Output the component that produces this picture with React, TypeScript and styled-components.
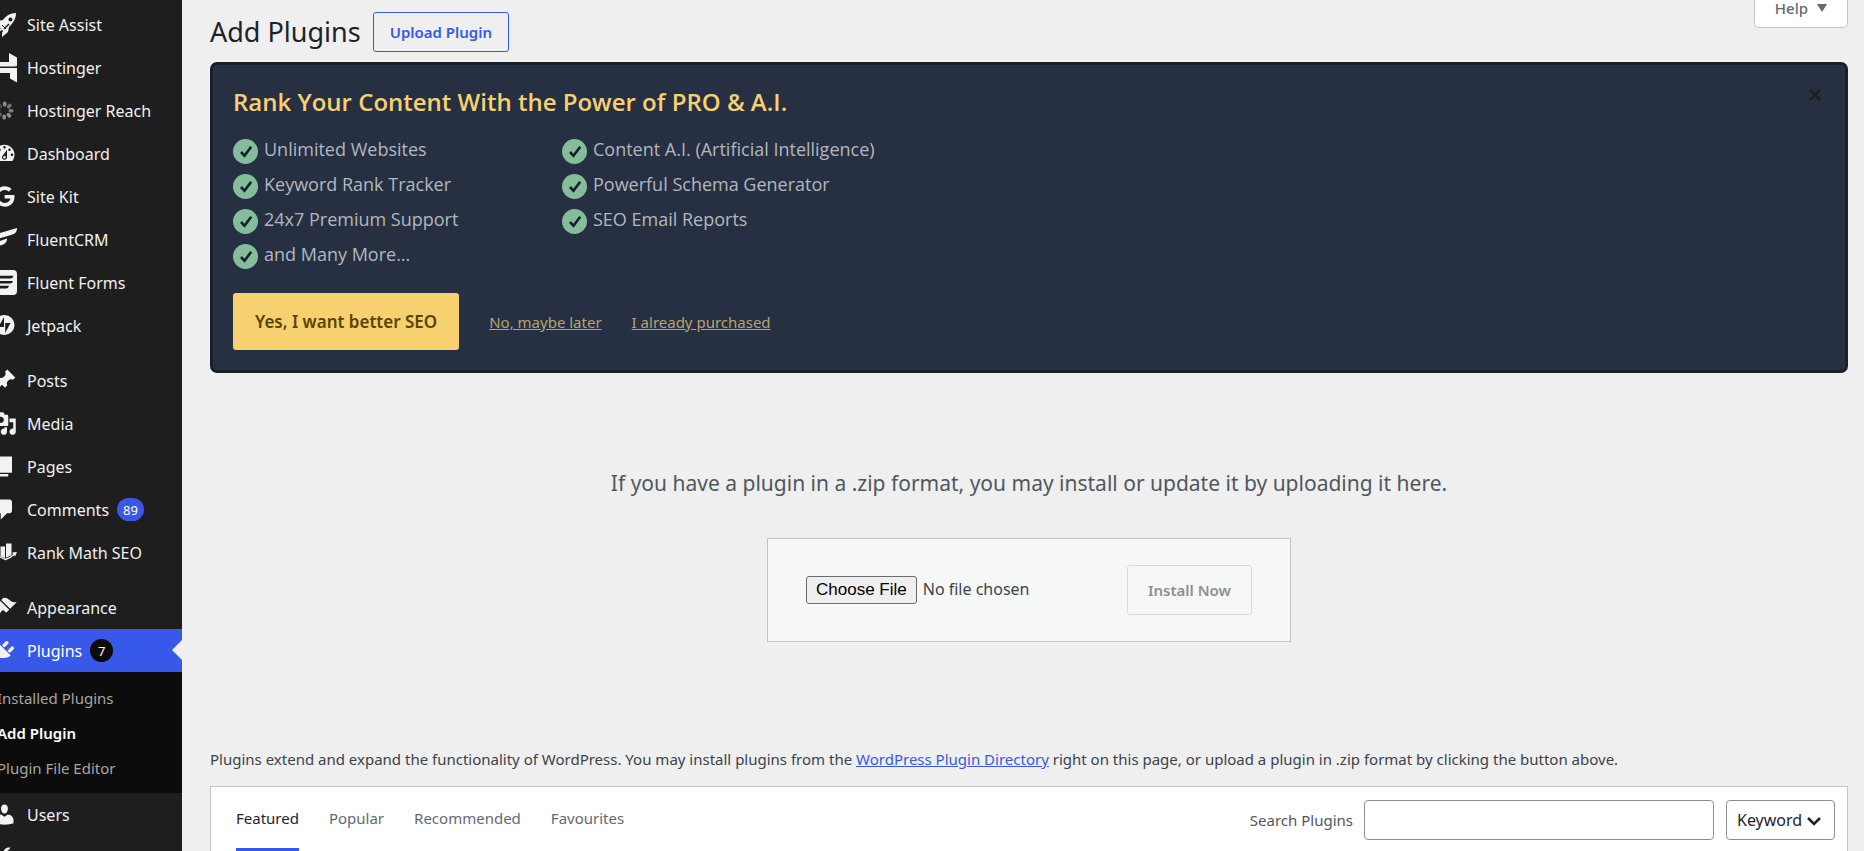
import React from "react";
import styled, { createGlobalStyle, css } from "styled-components";
import { FaGoogle } from "react-icons/fa";

const GlobalStyle = createGlobalStyle`
  *, *::before, *::after { box-sizing: border-box; }
  body {
    margin: 0;
    background: #efefef;
    color: #3c434a;
    font-family: "Segoe UI", "Noto Sans", "Open Sans", sans-serif;
    font-size: 15px;
    line-height: 24px;
  }
  h1, h2, p, ul { margin: 0; padding: 0; }
  ul { list-style: none; }
  button, input, select { font-family: inherit; }
`;

const Shell = styled.div`
  display: flex;
  height: 100vh;
  overflow: hidden;
`;

/* ---------- Sidebar ---------- */

const Sidebar = styled.nav`
  flex: none;
  width: 200px;
  margin-left: -18px;
  padding-top: 3px;
  background: #1e1e1e;
`;

const MenuGroup = styled.ul`
  & + & { margin-top: 12px; }
`;

const MenuLink = styled.a<{ $active?: boolean }>`
  position: relative;
  display: flex;
  align-items: center;
  height: 43px;
  color: #f0f0f1;
  font-size: 16px;
  text-decoration: none;
  white-space: nowrap;
  ${({ $active }) =>
    $active &&
    css`
      background: #3858e9;
      color: #fff;
      &::after {
        content: "";
        position: absolute;
        right: 0;
        top: 11px;
        border: 10px solid transparent;
        border-left-width: 0;
        border-right-color: #efefef;
      }
    `}
`;

const MenuIcon = styled.span`
  display: flex;
  flex: none;
  justify-content: center;
  width: 45px;
  color: #f3f1f1;
  svg { overflow: visible; fill: currentColor; }
`;

const CountBadge = styled.span<{ $dark?: boolean }>`
  display: inline-flex;
  align-items: center;
  justify-content: center;
  min-width: 23px;
  height: 23px;
  margin-left: 8px;
  padding: 0 6px;
  border-radius: 12px;
  background: ${({ $dark }) => ($dark ? "#0c0c0c" : "#3858e9")};
  color: #fff;
  font-size: 13px;
`;

const SubMenu = styled.ul`
  padding: 8px 0;
  background: #0c0c0c;
`;

const SubLink = styled.a<{ $current?: boolean }>`
  display: flex;
  align-items: center;
  height: 35px;
  padding-left: 15px;
  color: ${({ $current }) => ($current ? "#fff" : "#a5a5a5")};
  font-size: 15px;
  font-weight: ${({ $current }) => ($current ? 600 : 400)};
  text-decoration: none;
  white-space: nowrap;
`;

/* ---------- Main column ---------- */

const Main = styled.main`
  flex: 1;
  min-width: 0;
  padding: 0 16px 0 28px;
`;

const TitleBar = styled.header`
  display: flex;
  align-items: flex-start;
  height: 62px;
`;

const Title = styled.h1`
  padding-top: 12px;
  color: #1d2327;
  font-size: 27px;
  font-weight: 400;
  line-height: 40px;
`;

const UploadButton = styled.button`
  height: 40px;
  margin: 12px 0 0 12px;
  padding: 0 16px;
  border: 1px solid #3858e9;
  border-radius: 3px;
  background: transparent;
  color: #3858e9;
  font-size: 15px;
  font-weight: 600;
`;

const HelpButton = styled.button`
  display: flex;
  align-items: center;
  gap: 9px;
  height: 28px;
  margin-left: auto;
  padding: 0 20px 11px;
  border: 1px solid #c3c4c7;
  border-top: 0;
  border-radius: 0 0 5px 5px;
  background: #fff;
  color: #646970;
  font-size: 15px;
  font-weight: 500;
`;

const Banner = styled.section`
  position: relative;
  padding: 19px 20px 20px;
  border: 3px solid #18202b;
  border-radius: 7px;
  background: #263042;
  font-family: "Segoe UI", "Open Sans", "Noto Sans", sans-serif;
`;

const BannerTitle = styled.h2`
  color: #f7d070;
  font-size: 24px;
  font-weight: 600;
  line-height: 36px;
`;

const CloseButton = styled.button`
  position: absolute;
  top: 19px;
  right: 19px;
  display: flex;
  padding: 4px;
  border: 0;
  background: none;
  color: #1d1f21;
`;

const FeatureGrid = styled.ul`
  display: grid;
  grid-template-columns: 329px 329px;
  grid-auto-rows: 35px;
  margin-top: 17px;
`;

const Feature = styled.li`
  display: flex;
  align-items: flex-start;
  gap: 6px;
  color: #b3b7bd;
  font-size: 18px;
  line-height: 24px;
  white-space: nowrap;
  svg { flex: none; margin-top: 2px; }
`;

const BannerActions = styled.div`
  display: flex;
  align-items: center;
  gap: 30px;
  margin-top: 16px;
  font-family: "Segoe UI", "Noto Sans", "Open Sans", sans-serif;
`;

const PrimaryButton = styled.button`
  height: 57px;
  padding: 0 22px;
  border: 0;
  border-radius: 3px;
  background: #f7d070;
  color: #5b4300;
  font-size: 17px;
  font-weight: 600;
`;

const BannerLink = styled.a`
  color: #b9a46c;
  font-size: 15px;
`;

const UploadSection = styled.section`
  display: flex;
  flex-direction: column;
  align-items: center;
  padding: 90px 0 105px;
`;

const UploadText = styled.p`
  color: #50575e;
  font-size: 21px;
  line-height: 40px;
`;

const UploadForm = styled.form`
  display: flex;
  align-items: center;
  justify-content: space-between;
  width: 524px;
  height: 104px;
  margin-top: 35px;
  padding: 0 38px;
  border: 1px solid #c3c4c7;
  background: #f6f8f8;
`;

const FileInput = styled.input`
  width: 290px;
  color: #3c434a;
  font-size: 16px;
  &::file-selector-button {
    height: 28px;
    margin-right: 6px;
    padding: 0 9px;
    border: 1px solid #6b6b6b;
    border-radius: 3px;
    background: #efefef;
    color: #000;
    font-family: "Liberation Sans", Arial, sans-serif;
    font-size: 17px;
  }
`;

const InstallButton = styled.button`
  height: 50px;
  padding: 0 20px;
  border: 1px solid #d8dadb;
  border-radius: 3px;
  background: #f6f7f7;
  color: #8d9092;
  font-size: 15px;
  font-weight: 600;
`;

const Intro = styled.p`
  color: #3c434a;
  font-size: 15px;
  white-space: nowrap;
  a { color: #3858e9; }
`;

const FilterBar = styled.section`
  display: flex;
  align-items: flex-start;
  justify-content: space-between;
  height: 70px;
  margin-top: 15px;
  padding: 0 12px 0 25px;
  border: 1px solid #c3c4c7;
  background: #fff;
`;

const Tabs = styled.ul`
  display: flex;
  gap: 30px;
`;

const Tab = styled.a<{ $current?: boolean }>`
  display: block;
  height: 66px;
  padding-top: 19px;
  border-bottom: 5px solid ${({ $current }) => ($current ? "#3858e9" : "transparent")};
  color: ${({ $current }) => ($current ? "#1d2327" : "#646970")};
  font-size: 15px;
  text-decoration: none;
`;

const SearchForm = styled.form`
  display: flex;
  align-items: center;
  padding-top: 13px;
  color: #50575e;
`;

const SearchInput = styled.input`
  width: 350px;
  height: 40px;
  margin: 0 12px 0 11px;
  padding: 0 10px;
  border: 1px solid #8c8f94;
  border-radius: 4px;
  background: #fff;
  font-size: 17px;
`;

const SelectWrap = styled.span`
  position: relative;
  display: block;
  svg {
    position: absolute;
    top: 12px;
    right: 12px;
    pointer-events: none;
  }
`;

const Select = styled.select`
  display: block;
  width: 109px;
  height: 40px;
  padding: 0 28px 0 10px;
  border: 1px solid #8c8f94;
  border-radius: 4px;
  background: #fff;
  color: #1d2327;
  font-size: 16px;
  appearance: none;
`;

/* ---------- Icons ---------- */

const Glyph = ({ d }: { d: string }) => (
  <svg width="25" height="25" viewBox="0 0 20 20" fillRule="evenodd" aria-hidden="true">
    <path d={d} />
  </svg>
);

const paths = {
  dashboard:
    "M3.76 16h12.48c1.1-1.37 1.76-3.11 1.76-5 0-4.42-3.58-8-8-8s-8 3.58-8 8c0 1.89.66 3.63 1.76 5zM10 4c.55 0 1 .45 1 1s-.45 1-1 1-1-.45-1-1 .45-1 1-1zM6 6c.55 0 1 .45 1 1s-.45 1-1 1-1-.45-1-1 .45-1 1-1zm8 0c.55 0 1 .45 1 1s-.45 1-1 1-1-.45-1-1 .45-1 1-1zm-5.37 5.55L12 7v6c0 1.1-.9 2-2 2s-2-.9-2-2c0-.57.24-1.08.63-1.45zM4 10c.55 0 1 .45 1 1s-.45 1-1 1-1-.45-1-1 .45-1 1-1zm12 0c.55 0 1 .45 1 1s-.45 1-1 1-1-.45-1-1 .45-1 1-1zm-5 3c0-.55-.45-1-1-1s-1 .45-1 1 .45 1 1 1 1-.45 1-1z",
  pin: "M10.44 3.02l1.82-1.82 6.36 6.35-1.83 1.82c-1.05-.68-2.48-.57-3.41.36l-.75.75c-.92.93-1.04 2.35-.35 3.41l-1.83 1.82-2.41-2.41-2.8 2.79c-.42.42-3.38 2.71-3.8 2.29s1.86-3.39 2.28-3.81l2.79-2.79L4.1 9.36l1.83-1.82c1.05.69 2.48.57 3.4-.36l.75-.75c.93-.92 1.05-2.35.36-3.41z",
  media:
    "M13 11V4c0-.55-.45-1-1-1h-1.67L9 1H5L3.67 3H2c-.55 0-1 .45-1 1v7c0 .55.45 1 1 1h10c.55 0 1-.45 1-1zM7 4.5c1.38 0 2.5 1.12 2.5 2.5S8.38 9.5 7 9.5 4.5 8.38 4.5 7 5.62 4.5 7 4.5zM14 6h5v10.5c0 1.38-1.12 2.5-2.5 2.5S14 17.88 14 16.5s1.12-2.5 2.5-2.5c.17 0 .34.02.5.05V9h-3V6zm-4 8.05V13h2v3.5c0 1.38-1.12 2.5-2.5 2.5S7 17.88 7 16.5 8.12 14 9.5 14c.17 0 .34.02.5.05z",
  page: "M6 15V2h10v13H6zm-1 1h8v2H3V5h2v11z",
  comment:
    "M5 2h9c1.1 0 2 .9 2 2v7c0 1.1-.9 2-2 2h-2l-5 5v-5H5c-1.1 0-2-.9-2-2V4c0-1.1.9-2 2-2z",
  brush:
    "M14.48 11.06L7.41 3.99l1.5-1.5c.5-.56 2.3-.47 3.51.32 1.21.8 1.43 1.28 2.91 2.1 1.18.64 2.45 1.26 4.45.85zm-.71.71L6.7 4.7 4.93 6.47c-.39.39-.39 1.02 0 1.41l1.06 1.06c.39.39.39 1.03 0 1.42-.6.6-1.43 1.11-2.21 1.69-.35.26-.7.53-1.01.84C1.43 14.23.4 16.08 1.4 17.07c.99 1 2.84-.03 4.18-1.36.31-.31.58-.66.85-1.02.57-.78 1.08-1.61 1.69-2.21.39-.39 1.02-.39 1.41 0l1.06 1.06c.39.39 1.02.39 1.41 0z",
  plug: "M13.11 4.36L9.87 7.6 8 5.73l3.24-3.24c.35-.34 1.05-.2 1.56.32.52.51.66 1.21.31 1.55zm-8 1.77l.91-1.12 9.01 9.01-1.19.84c-.71.71-2.63 1.16-3.82 1.16H6.14L4.9 17.26c-.59.59-1.54.59-2.12 0-.59-.58-.59-1.53 0-2.12l1.24-1.24v-3.88c0-1.13.4-3.19 1.09-3.89zm7.26 3.97l3.24-3.24c.34-.35 1.04-.21 1.55.31.52.51.66 1.21.31 1.55l-3.24 3.25z",
  user: "M10 9.25c-2.27 0-2.73-3.44-2.73-3.44C7 4.02 7.82 2 9.97 2c2.16 0 2.98 2.02 2.71 3.81 0 0-.41 3.44-2.68 3.44zm0 2.57L12.72 10c2.39 0 4.52 2.33 4.52 4.53v2.49s-3.65 1.13-7.24 1.13c-3.65 0-7.24-1.13-7.24-1.13v-2.49c0-2.25 1.94-4.48 4.47-4.48z",
  wrench:
    "M16.68 9.77c-1.34 1.34-3.3 1.67-4.95.99l-5.41 6.52c-.99.99-2.59.99-3.58 0s-.99-2.59 0-3.57l6.52-5.42c-.68-1.65-.35-3.61.99-4.95 1.28-1.28 3.12-1.62 4.72-1.06l-2.89 2.89 2.82 2.82 2.86-2.87c.53 1.58.18 3.39-1.08 4.65z",
};

const Drawing = ({ children }: { children: React.ReactNode }) => (
  <svg width="25" height="25" viewBox="0 0 25 25" aria-hidden="true">
    {children}
  </svg>
);

const RocketIcon = () => (
  <Drawing>
    <path
      fillRule="evenodd"
      d="M24 1c-6 0-10 3-13 7l-5 1-4 6 5-1 4 5-1 2v4l6-5 1-5c4-4 7-8 7-14zM18.500 5.500a2 2 0 1 1-.1 0zM8 16l-4 6 6-4z"
    />
    <path d="M12 17l5-5" stroke="#1e1e1e" strokeWidth="1.500" />
    <path d="M10 13l4 4" stroke="#1e1e1e" strokeWidth="1" />
  </Drawing>
);

const HostingerIcon = () => (
  <Drawing>
    <path d="M17 -2l8 4.500v8.500l-8-4zM0 7h18.500l6.500 4.500H0zM0 13h25v14.500l-7-4v-5.500H0zM0 -2l7 4v5H0z" />
  </Drawing>
);

const SpinnerIcon = () => (
  <Drawing>
    {[0, 45, 90, 135, 180, 225, 270, 315].map((a, i) => (
      <rect
        key={a}
        x="11"
        y="3.500"
        width="3.500"
        height="5"
        rx="1.500"
        fill={["#8a8c8e", "#77797b", "#77797b", "#8a8c8e", "#8a8c8e", "#5c5e60", "#505254", "#46484a"][i]}
        transform={`rotate(${a} 12.500 12.500)`}
      />
    ))}
  </Drawing>
);

const FluentCrmIcon = () => (
  <Drawing>
    <path d="M25 1c0 4-2 6-6 7L0 13.500C0 9.500 2 7.500 6 6.500zM15 11.500c0 3-1 5-5 6.500L0 21c0-3 1.500-5 5-6z" />
  </Drawing>
);

const FluentFormsIcon = () => (
  <Drawing>
    <rect width="25" height="25" rx="4" />
    <path
      d="M4 5.800h17.500q-.5 2.700-3 2.700H4zM4 11h17q-.5 2.500-3 2.500H4zM4 15.800h13q-.5 2.700-3 2.700H4z"
      fill="#1e1e1e"
    />
  </Drawing>
);

const JetpackIcon = () => (
  <Drawing>
    <circle cx="12.500" cy="12" r="10" />
    <path d="M12 4v10H6.500zM13.200 20V10h5.300z" fill="#1e1e1e" />
  </Drawing>
);

const RankMathIcon = () => (
  <Drawing>
    <path d="M3 9h4.500v7L3 15zM8.500 6.500h4.500v11.500l-4.500-1.800zM14 3.500h5.500v11.500L14 17.800z" />
    <path d="M0 15q7 1 13.500 4.500 5-1.500 9-5.500" fill="none" stroke="#f3f1f1" strokeWidth="1.500" />
    <path d="M20 12.500l5-.5-2 4.500z" />
  </Drawing>
);

const CheckIcon = () => (
  <svg width="25" height="25" viewBox="0 0 25 25" aria-hidden="true">
    <circle cx="12.500" cy="12.500" r="12.500" fill="#85bd9c" />
    <path d="M8 13l3.500 3.800L18.200 7.800" fill="none" stroke="#15202b" strokeWidth="2.600" />
  </svg>
);

/* ---------- Data ---------- */

type Item = { label: string; icon: React.ReactNode; count?: number; active?: boolean };

const groups: Item[][] = [
  [
    { label: "Site Assist", icon: <RocketIcon /> },
    { label: "Hostinger", icon: <HostingerIcon /> },
    { label: "Hostinger Reach", icon: <SpinnerIcon /> },
    { label: "Dashboard", icon: <Glyph d={paths.dashboard} /> },
    { label: "Site Kit", icon: <FaGoogle size={21} /> },
    { label: "FluentCRM", icon: <FluentCrmIcon /> },
    { label: "Fluent Forms", icon: <FluentFormsIcon /> },
    { label: "Jetpack", icon: <JetpackIcon /> },
  ],
  [
    { label: "Posts", icon: <Glyph d={paths.pin} /> },
    { label: "Media", icon: <Glyph d={paths.media} /> },
    { label: "Pages", icon: <Glyph d={paths.page} /> },
    { label: "Comments", icon: <Glyph d={paths.comment} />, count: 89 },
    { label: "Rank Math SEO", icon: <RankMathIcon /> },
  ],
  [
    { label: "Appearance", icon: <Glyph d={paths.brush} /> },
    { label: "Plugins", icon: <Glyph d={paths.plug} />, count: 7, active: true },
    { label: "Users", icon: <Glyph d={paths.user} /> },
    { label: "Tools", icon: <Glyph d={paths.wrench} /> },
  ],
];

const pluginPages = ["Installed Plugins", "Add Plugin", "Plugin File Editor"];

const features = [
  "Unlimited Websites",
  "Content A.I. (Artificial Intelligence)",
  "Keyword Rank Tracker",
  "Powerful Schema Generator",
  "24x7 Premium Support",
  "SEO Email Reports",
  "and Many More...",
];

const tabs = ["Featured", "Popular", "Recommended", "Favourites"];

export default function App() {
  return (
    <>
      <GlobalStyle />
      <Shell>
        <Sidebar aria-label="Main menu">
          {groups.map((items, g) => (
            <MenuGroup key={g}>
              {items.map(({ label, icon, count, active }) => (
                <li key={label}>
                  <MenuLink href="#" $active={active}>
                    <MenuIcon>{icon}</MenuIcon>
                    {label}
                    {count && <CountBadge $dark={active}>{count}</CountBadge>}
                  </MenuLink>
                  {active && (
                    <SubMenu>
                      {pluginPages.map((page) => (
                        <li key={page}>
                          <SubLink href="#" $current={page === "Add Plugin"}>
                            {page}
                          </SubLink>
                        </li>
                      ))}
                    </SubMenu>
                  )}
                </li>
              ))}
            </MenuGroup>
          ))}
        </Sidebar>

        <Main>
          <TitleBar>
            <Title>Add Plugins</Title>
            <UploadButton type="button">Upload Plugin</UploadButton>
            <HelpButton type="button">
              Help
              <svg width="10" height="8" viewBox="0 0 10 8" aria-hidden="true">
                <path d="M0 0h10L5 8z" fill="#646970" />
              </svg>
            </HelpButton>
          </TitleBar>

          <Banner>
            <BannerTitle>Rank Your Content With the Power of PRO &amp; A.I.</BannerTitle>
            <CloseButton type="button" aria-label="Dismiss">
              <svg width="14" height="14" viewBox="0 0 14 14" aria-hidden="true">
                <path d="M2 2l10 10M12 2L2 12" stroke="currentColor" strokeWidth="2.500" />
              </svg>
            </CloseButton>
            <FeatureGrid>
              {features.map((text) => (
                <Feature key={text}>
                  <CheckIcon />
                  {text}
                </Feature>
              ))}
            </FeatureGrid>
            <BannerActions>
              <PrimaryButton type="button">Yes, I want better SEO</PrimaryButton>
              <BannerLink href="#">No, maybe later</BannerLink>
              <BannerLink href="#">I already purchased</BannerLink>
            </BannerActions>
          </Banner>

          <UploadSection>
            <UploadText>
              If you have a plugin in a .zip format, you may install or update it by uploading it here.
            </UploadText>
            <UploadForm>
              <FileInput type="file" aria-label="Plugin zip file" />
              <InstallButton type="button" disabled>
                Install Now
              </InstallButton>
            </UploadForm>
          </UploadSection>

          <Intro>
            Plugins extend and expand the functionality of WordPress. You may install plugins from the{" "}
            <a href="#">WordPress Plugin Directory</a> right on this page, or upload a plugin in .zip format
            by clicking the button above.
          </Intro>

          <FilterBar>
            <Tabs>
              {tabs.map((tab) => (
                <li key={tab}>
                  <Tab href="#" $current={tab === "Featured"}>
                    {tab}
                  </Tab>
                </li>
              ))}
            </Tabs>
            <SearchForm>
              <label htmlFor="plugin-search">Search Plugins</label>
              <SearchInput id="plugin-search" type="search" />
              <SelectWrap>
                <Select aria-label="Search plugins by" defaultValue="Keyword">
                  <option>Keyword</option>
                  <option>Author</option>
                  <option>Tag</option>
                </Select>
                <svg width="18" height="18" viewBox="0 0 18 18" aria-hidden="true">
                  <path d="M3 6l6 6 6-6" fill="none" stroke="#1d2327" strokeWidth="2.500" />
                </svg>
              </SelectWrap>
            </SearchForm>
          </FilterBar>
        </Main>
      </Shell>
    </>
  );
}
